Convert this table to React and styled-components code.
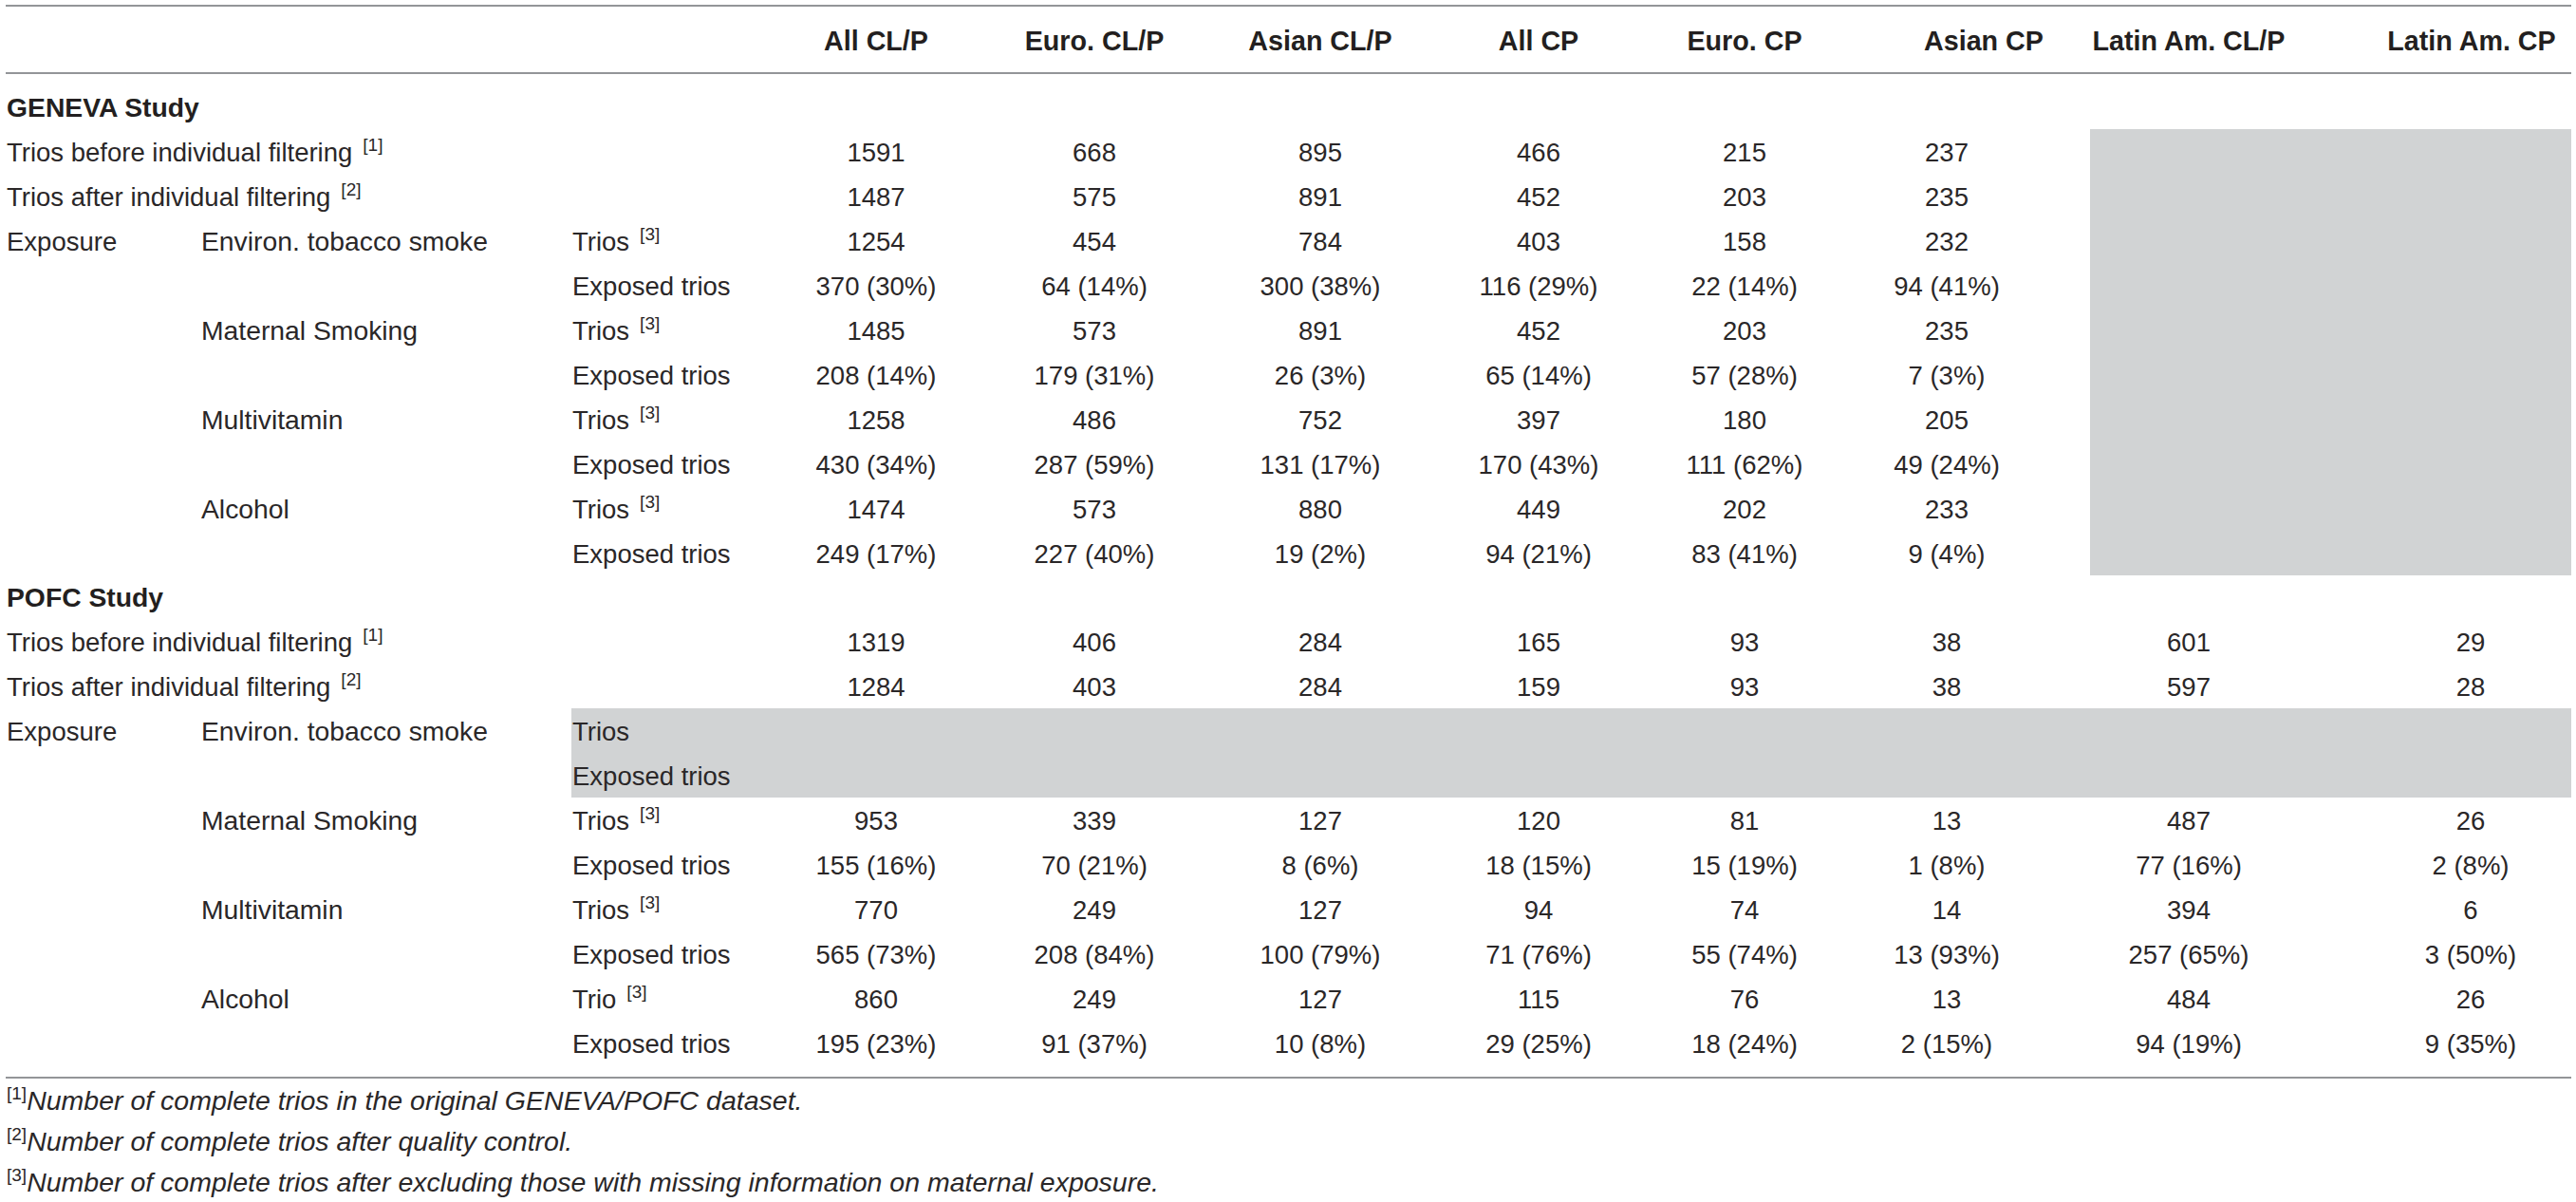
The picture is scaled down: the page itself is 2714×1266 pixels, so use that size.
import React from "react";
import styled, { createGlobalStyle } from "styled-components";

const GlobalStyle = createGlobalStyle`
  html, body {
    margin: 0;
    padding: 0;
    background: #ffffff;
  }
  body {
    font-family: "Liberation Sans", Arial, sans-serif;
    color: #2a2728;
  }
`;

const Page = styled.div`
  padding: 5px 0 0 6px;
`;

const Table = styled.table`
  border-collapse: collapse;
  table-layout: fixed;
  width: 2703px;
  border-top: 2px solid #939598;
  font-size: 27.5px;
`;

const HeadRow = styled.tr`
  border-bottom: 2px solid #939598;
`;

const HeadCell = styled.th`
  font-weight: 700;
  font-size: 28.7px;
  line-height: 45px;
  color: #231f20;
  padding: 14px ${({ $pr }) => $pr || 0}px 10px ${({ $pl }) => $pl || 0}px;
  text-align: center;
  white-space: nowrap;
`;

const StudyCell = styled.td`
  font-weight: 700;
  font-size: 28.3px;
  line-height: 45px;
  color: #231f20;
  padding: ${({ $top }) => $top}px 0 0 1px;
  text-align: left;
  white-space: nowrap;
`;

const LabelCell = styled.td`
  font-size: ${({ $size }) => $size || 27.5}px;
  line-height: 45px;
  padding: 2px 0 0 1px;
  text-align: left;
  vertical-align: top;
  white-space: nowrap;
  background: ${({ $grey }) => ($grey ? "#d1d3d4" : "transparent")};
`;

const DataCell = styled.td`
  line-height: 45px;
  padding: 2px ${({ $pr }) => $pr || 0}px 0 ${({ $pl }) => $pl || 0}px;
  text-align: center;
  white-space: nowrap;
`;

const GreyBlock = styled.td`
  background: #d1d3d4;
  padding: 0;
`;

const Sup = styled.sup`
  font-size: 19px;
  font-style: normal;
  line-height: 0;
  vertical-align: 11px;
  margin-left: ${({ $gap }) => $gap || 0}px;
`;

const Footnotes = styled.div`
  width: 2703px;
  margin-top: 12px;
  border-top: 2px solid #939598;
  padding-top: 2px;
`;

const Note = styled.div`
  font-size: 28.5px;
  font-style: italic;
  line-height: 43px;
  padding-left: 1px;
  white-space: nowrap;
`;

const colWidths = [205, 391, 204, 234, 226, 250, 210, 224, 252, 208, 299];

const headers = [
  { label: "All CL/P" },
  { label: "Euro. CL/P" },
  { label: "Asian CL/P" },
  { label: "All CP" },
  { label: "Euro. CP" },
  { label: "Asian CP", pl: 28 },
  { label: "Latin Am. CL/P" },
  { label: "Latin Am. CP", pl: 89 },
];

// per-column offsets of the data values inside their column
const dataPad = [{}, {}, {}, {}, {}, { pr: 50 }, {}, { pl: 87 }];

const geneva = [
  { a: "Trios before individual filtering", note: 1, values: ["1591", "668", "895", "466", "215", "237"] },
  { a: "Trios after individual filtering", note: 2, values: ["1487", "575", "891", "452", "203", "235"] },
  { a: "Exposure", b: "Environ. tobacco smoke", c: "Trios", note: 3, values: ["1254", "454", "784", "403", "158", "232"] },
  { c: "Exposed trios", values: ["370 (30%)", "64 (14%)", "300 (38%)", "116 (29%)", "22 (14%)", "94 (41%)"] },
  { b: "Maternal Smoking", c: "Trios", note: 3, values: ["1485", "573", "891", "452", "203", "235"] },
  { c: "Exposed trios", values: ["208 (14%)", "179 (31%)", "26 (3%)", "65 (14%)", "57 (28%)", "7 (3%)"] },
  { b: "Multivitamin", c: "Trios", note: 3, values: ["1258", "486", "752", "397", "180", "205"] },
  { c: "Exposed trios", values: ["430 (34%)", "287 (59%)", "131 (17%)", "170 (43%)", "111 (62%)", "49 (24%)"] },
  { b: "Alcohol", c: "Trios", note: 3, values: ["1474", "573", "880", "449", "202", "233"] },
  { c: "Exposed trios", values: ["249 (17%)", "227 (40%)", "19 (2%)", "94 (21%)", "83 (41%)", "9 (4%)"] },
];

const pofc = [
  { a: "Trios before individual filtering", note: 1, values: ["1319", "406", "284", "165", "93", "38", "601", "29"] },
  { a: "Trios after individual filtering", note: 2, values: ["1284", "403", "284", "159", "93", "38", "597", "28"] },
  { a: "Exposure", b: "Environ. tobacco smoke", c: "Trios", grey: true },
  { c: "Exposed trios", grey: true },
  { b: "Maternal Smoking", c: "Trios", note: 3, values: ["953", "339", "127", "120", "81", "13", "487", "26"] },
  { c: "Exposed trios", values: ["155 (16%)", "70 (21%)", "8 (6%)", "18 (15%)", "15 (19%)", "1 (8%)", "77 (16%)", "2 (8%)"] },
  { b: "Multivitamin", c: "Trios", note: 3, values: ["770", "249", "127", "94", "74", "14", "394", "6"] },
  { c: "Exposed trios", values: ["565 (73%)", "208 (84%)", "100 (79%)", "71 (76%)", "55 (74%)", "13 (93%)", "257 (65%)", "3 (50%)"] },
  { b: "Alcohol", c: "Trio", note: 3, values: ["860", "249", "127", "115", "76", "13", "484", "26"] },
  { c: "Exposed trios", values: ["195 (23%)", "91 (37%)", "10 (8%)", "29 (25%)", "18 (24%)", "2 (15%)", "94 (19%)", "9 (35%)"] },
];

const notes = [
  "Number of complete trios in the original GENEVA/POFC dataset.",
  "Number of complete trios after quality control.",
  "Number of complete trios after excluding those with missing information on maternal exposure.",
];

const Label = ({ text, note }) => (
  <>
    {text}
    {note && <Sup $gap={11}>[{note}]</Sup>}
  </>
);

const BodyRow = ({ row, greyBlock }) => {
  const values = row.values || [];
  return (
    <tr>
      {row.c === undefined ? (
        <LabelCell colSpan={3}>
          <Label text={row.a} note={row.note} />
        </LabelCell>
      ) : (
        <>
          <LabelCell>{row.a}</LabelCell>
          <LabelCell $size={28.3}>{row.b}</LabelCell>
          <LabelCell $grey={row.grey}>
            <Label text={row.c} note={row.note} />
          </LabelCell>
        </>
      )}
      {row.grey && row.c === "Trios" && <GreyBlock colSpan={8} rowSpan={2} />}
      {values.map((v, i) => (
        <DataCell key={i} $pl={dataPad[i].pl} $pr={dataPad[i].pr}>
          {v}
        </DataCell>
      ))}
      {greyBlock && <GreyBlock colSpan={2} rowSpan={10} />}
    </tr>
  );
};

const App = () => (
  <Page>
    <GlobalStyle />
    <Table>
      <colgroup>
        {colWidths.map((w, i) => (
          <col key={i} style={{ width: w }} />
        ))}
      </colgroup>
      <thead>
        <HeadRow>
          <HeadCell />
          <HeadCell />
          <HeadCell />
          {headers.map((h) => (
            <HeadCell key={h.label} $pl={h.pl} $pr={h.pr}>
              {h.label}
            </HeadCell>
          ))}
        </HeadRow>
      </thead>
      <tbody>
        <tr>
          <StudyCell colSpan={11} $top={13}>
            GENEVA Study
          </StudyCell>
        </tr>
        {geneva.map((row, i) => (
          <BodyRow key={i} row={row} greyBlock={i === 0} />
        ))}
        <tr>
          <StudyCell colSpan={11} $top={1}>
            POFC Study
          </StudyCell>
        </tr>
        {pofc.map((row, i) => (
          <BodyRow key={i} row={row} />
        ))}
      </tbody>
    </Table>
    <Footnotes>
      {notes.map((n, i) => (
        <Note key={i}>
          <Sup>[{i + 1}]</Sup>
          {n}
        </Note>
      ))}
    </Footnotes>
  </Page>
);

export default App;
